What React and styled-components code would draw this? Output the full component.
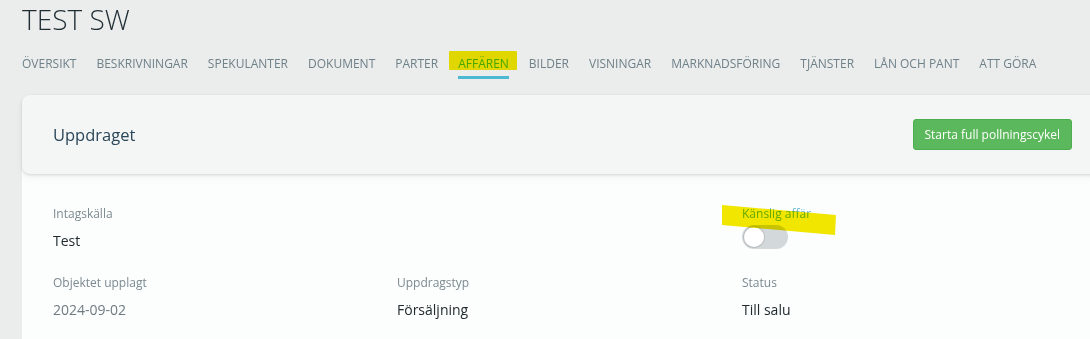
import React, { useState } from 'react';
import styled, { createGlobalStyle } from 'styled-components';

const colors = {
  page: '#ebecec',
  title: '#1f2d33',
  tab: '#6f8189',
  tabActive: '#4cb8d1',
  underline: '#4cb8d1',
  cardHeader: '#f4f5f5',
  cardBody: '#fcfdfd',
  heading: '#2a4658',
  label: '#7b8a91',
  value: '#222b2f',
  muted: '#6f7b81',
  green: '#5cb85c',
  marker: '#f3e800',
};

const GlobalStyle = createGlobalStyle`
  body {
    margin: 0;
    background: ${colors.page};
    font-family: 'Open Sans', 'Noto Sans', sans-serif;
    overflow: hidden;
  }
`;

const Page = styled.div`
  padding: 0 0 0 22px;
  width: 1102px;
`;

const Title = styled.h1`
  margin: 0;
  padding-top: 1px;
  font-size: 28px;
  font-weight: 300;
  line-height: 36px;
  color: ${colors.title};
`;

const Tabs = styled.nav`
  display: flex;
  gap: 20px;
  margin-top: 17px;
  height: 41px;
`;

const Tab = styled.div`
  position: relative;
  font-size: 12px;
  line-height: 18px;
  height: 25px;
  text-transform: uppercase;
  color: ${(props) => (props.active ? colors.tabActive : colors.tab)};
  border-bottom: 3px solid ${(props) => (props.active ? colors.underline : 'transparent')};
  box-sizing: border-box;
  padding-top: 1px;
`;

const Marker = styled.svg`
  position: absolute;
  mix-blend-mode: multiply;
  pointer-events: none;
`;

const Card = styled.div`
  width: 1080px;
  background: ${colors.cardBody};
  border-radius: 8px 8px 0 0;
`;

const CardHeader = styled.div`
  display: flex;
  align-items: center;
  justify-content: space-between;
  height: 79px;
  padding: 0 30px 0 31px;
  background: ${colors.cardHeader};
  border-radius: 8px;
  box-shadow: 0 1px 3px rgba(0, 0, 0, 0.14), 0 4px 8px rgba(0, 0, 0, 0.04);
`;

const Heading = styled.h2`
  margin: 0;
  font-size: 16.5px;
  font-weight: 400;
  color: ${colors.heading};
`;

const Button = styled.button`
  height: 31px;
  padding: 0 11px;
  border: 1px solid #4cae4c;
  border-radius: 3px;
  background: ${colors.green};
  color: #fff;
  font-family: inherit;
  font-size: 12px;
  cursor: pointer;
`;

const CardBody = styled.div`
  display: grid;
  grid-template-columns: 344px 345px 345px;
  row-gap: 23px;
  padding: 31px 31px 30px;
`;

const Field = styled.div`
  position: relative;
  display: flex;
  flex-direction: column;
  gap: 9px;
`;

const Label = styled.div`
  font-size: 12px;
  line-height: 17px;
  color: ${(props) => props.color || colors.label};
`;

const Value = styled.div`
  font-size: 14px;
  line-height: 20px;
  color: ${(props) => props.color || colors.value};
`;

const Track = styled.button`
  position: relative;
  width: 46px;
  height: 24px;
  margin-top: -6px;
  padding: 0;
  border: none;
  border-radius: 12px;
  background: ${(props) => (props.on ? colors.green : '#d3d8da')};
  cursor: pointer;
`;

const Knob = styled.span`
  position: absolute;
  top: 2px;
  left: ${(props) => (props.on ? '24px' : '2px')};
  width: 20px;
  height: 20px;
  border-radius: 50%;
  background: #fff;
  box-shadow: 0 0 0 1px rgba(0, 0, 0, 0.12);
`;

function Toggle() {
  const [on, setOn] = useState(false);
  return (
    <Track on={on ? 1 : 0} onClick={() => setOn(!on)}>
      <Knob on={on ? 1 : 0} />
    </Track>
  );
}

const tabs = [
  'Översikt', 'Beskrivningar', 'Spekulanter', 'Dokument', 'Parter', 'Affären',
  'Bilder', 'Visningar', 'Marknadsföring', 'Tjänster', 'Lån och pant', 'Att göra',
];

export default function App() {
  return (
    <Page>
      <GlobalStyle />
      <Title>TEST SW</Title>
      <Tabs>
        {tabs.map((t) => (
          <Tab key={t} active={t === 'Affären'}>
            {t}
            {t === 'Affären' && (
              <Marker width="68" height="19" style={{ left: -9, top: -3 }}>
                <rect x="0" y="0" width="68" height="19" rx="1" fill={colors.marker} />
              </Marker>
            )}
          </Tab>
        ))}
      </Tabs>
      <Card>
        <CardHeader>
          <Heading>Uppdraget</Heading>
          <Button>Starta full pollningscykel</Button>
        </CardHeader>
        <CardBody>
          <Field>
            <Label>Intagskälla</Label>
            <Value>Test</Value>
          </Field>
          <div />
          <Field>
            <Label color="#6bbad0">Känslig affär</Label>
            <Toggle />
            <Marker width="118" height="32" style={{ left: -20, top: 0 }}>
              <polygon points="0,0 114,10 113,30 0,20" fill={colors.marker} />
            </Marker>
          </Field>
          <Field>
            <Label>Objektet upplagt</Label>
            <Value color={colors.muted}>2024-09-02</Value>
          </Field>
          <Field>
            <Label>Uppdragstyp</Label>
            <Value>Försäljning</Value>
          </Field>
          <Field>
            <Label>Status</Label>
            <Value>Till salu</Value>
          </Field>
        </CardBody>
      </Card>
    </Page>
  );
}
